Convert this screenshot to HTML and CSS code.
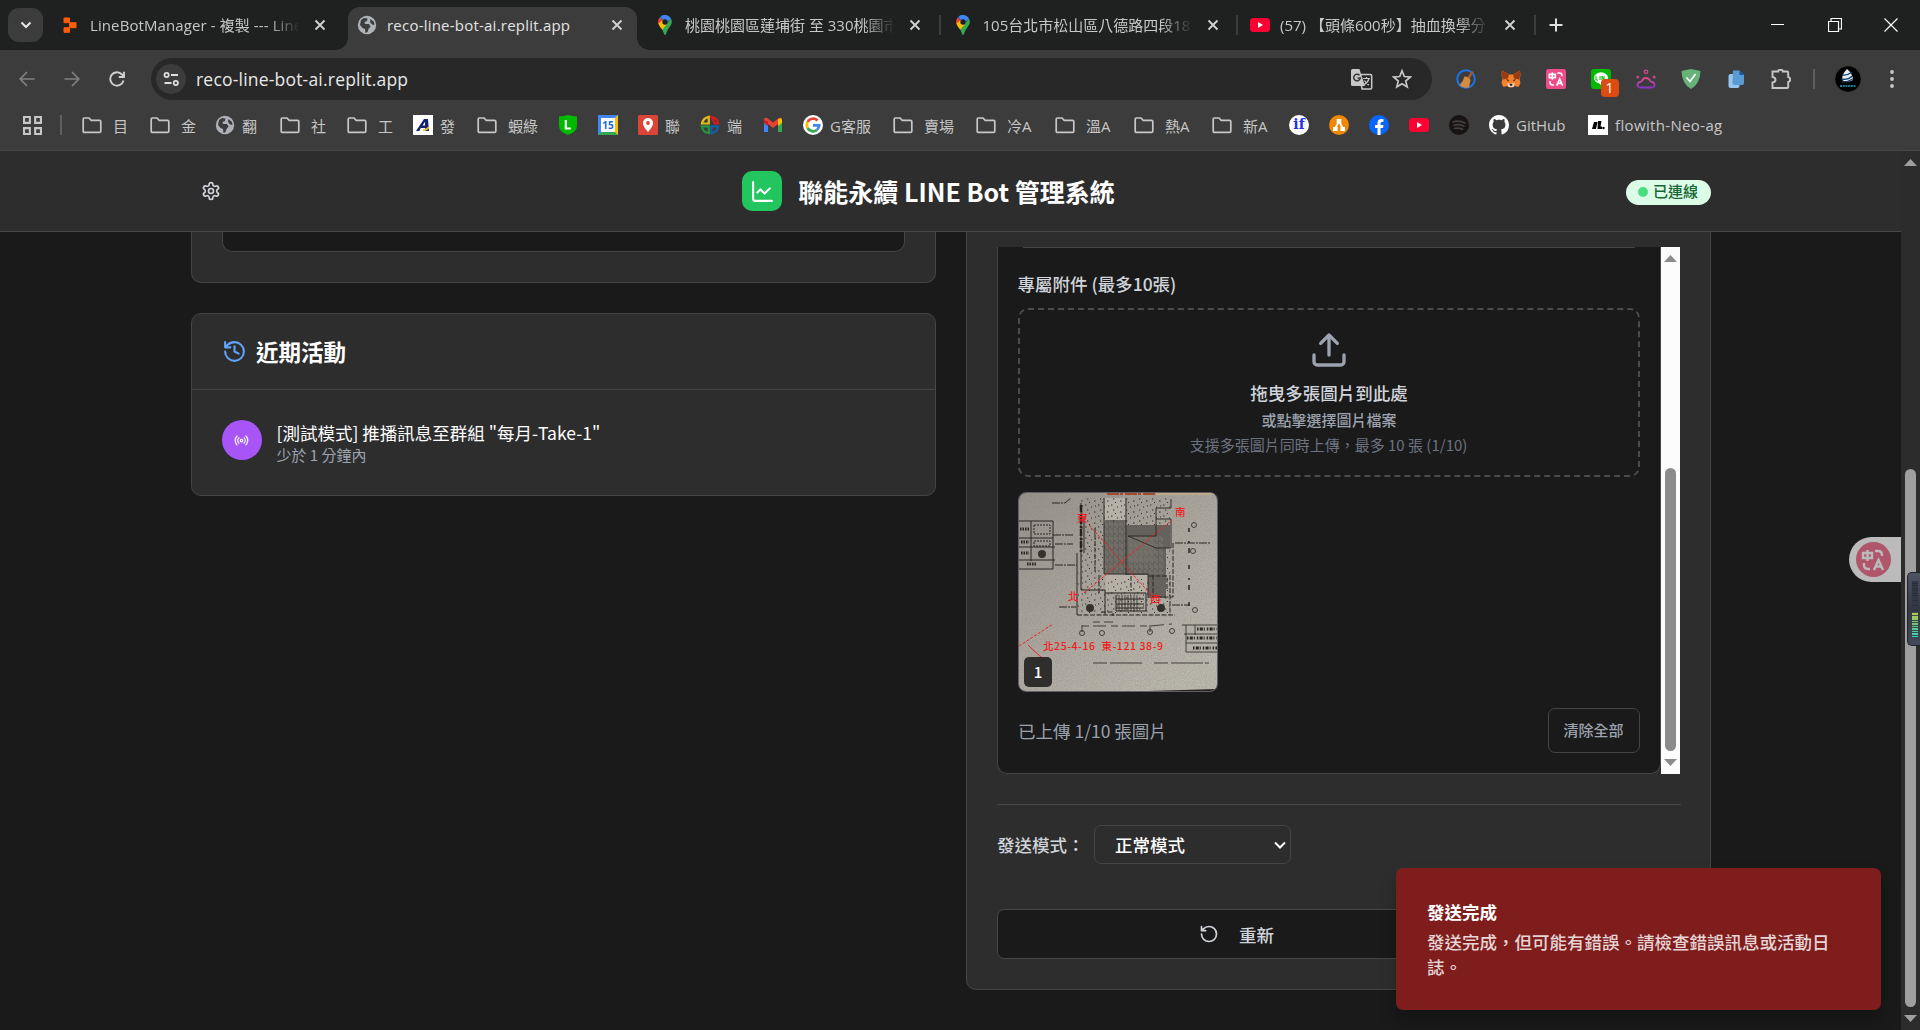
FILE: index.html
```html
<!DOCTYPE html>
<html lang="zh-Hant">
<head>
<meta charset="utf-8">
<title>reco-line-bot-ai.replit.app</title>
<link rel="stylesheet" href="styles.css">
</head>
<body>
<svg class="defs" width="0" height="0">
  <symbol id="folder" viewBox="0 0 20 20"><path d="M1.200 16.200V4.200Q1.200 3 2.400 3H7l2.200 2.400h8.400q1.200 0 1.200 1.200v9.600q0 1.200-1.200 1.200H2.400q-1.200 0-1.200-1.200z" fill="none" stroke="#c7c7c7" stroke-width="1.700"/></symbol>
  <symbol id="globe" viewBox="0 0 20 20"><circle cx="10" cy="10" r="9.200" fill="#aeb2b8"/><path d="M4 5l3-2 3.500.500-.500 2.500-2.500 1 .500 2h4l1.500 2.500-2 2.500-1 3-2 1-.500-4-2.500-1L3 10zM13.500 4l3.500 3 .5 3-2.500-.500-2-2.500z" fill="#3c3c3c"/></symbol>
  <symbol id="close" viewBox="0 0 12 12"><path d="M1.500 1.500l9 9m0-9l-9 9" stroke="#d0d0d0" stroke-width="1.900" fill="none"/></symbol>
  <symbol id="pin" viewBox="0 0 14 20"><path d="M7 0a7 7 0 0 0-5.400 2.500L5 5.300z" fill="#1a73e8"/><path d="M2.800 1.300A7 7 0 0 1 13 3.400L8.600 8.700 4.800 5z" fill="#4285f4"/><path d="M1.600 2.500Q-.800 5.800.5 9L4.600 6.900 5.500 5.500z" fill="#ea4335"/><path d="M13 3.400Q15 7.500 12.300 11 9 15 7.700 19.500q-.7 1-1.400 0Q5.300 15 1.700 11L9.300 8.300z" fill="#34a853"/><path d="M.3 8.500Q1 11 4.300 14.700L9.700 8 4.700 5.200z" fill="#fbbc04"/><circle cx="7" cy="7" r="2.700" fill="#1f2120"/></symbol>
  <symbol id="youtube" viewBox="0 0 20 20"><rect y="3" width="20" height="14" rx="3.500" fill="#ff0033"/><path d="M8 7l5 3-5 3z" fill="#fff"/></symbol>
  <symbol id="translate-mark" viewBox="0 0 24 24"><path d="M2 5h9v5H2zM6.500 2v11M14 3h3q4 0 4 4v1M3 15v2q0 4 4 4h2M13 22l4.500-10L22 22m-7.500-3.500h6" fill="none" stroke="currentColor" stroke-width="2.400"/></symbol>
</svg>

<div class="browser">
  <div class="tabstrip">
    <div class="tab-search"><svg width="12" height="8" viewBox="0 0 12 8"><path d="M1.500 1.500L6 6l4.500-4.500" fill="none" stroke="#e8e8e8" stroke-width="2"/></svg></div>
    <div class="tab first">
      <svg class="fav" viewBox="0 0 20 20"><path d="M4 3h5.500v4.700H4zM9.500 7.700H16v5H9.500zM4 12.700h5.500v4.600H4z" fill="#fd5c0b" stroke="#fd5c0b" stroke-width="1" stroke-linejoin="round"/></svg>
      <span class="tab-title">LineBotManager - 複製 --- Line Bot</span>
      <svg class="x"><use href="#close"/></svg>
    </div>
    <div class="tab active">
      <svg class="fav"><use href="#globe"/></svg>
      <span class="tab-title url-tab">reco-line-bot-ai.replit.app</span>
      <svg class="x"><use href="#close"/></svg>
    </div>
    <div class="tab sep">
      <svg class="fav"><use href="#pin"/></svg>
      <span class="tab-title">桃園桃園區蓮埔街 至 330桃園市桃園</span>
      <svg class="x"><use href="#close"/></svg>
    </div>
    <div class="tab sep">
      <svg class="fav"><use href="#pin"/></svg>
      <span class="tab-title">105台北市松山區八德路四段180號</span>
      <svg class="x"><use href="#close"/></svg>
    </div>
    <div class="tab sep">
      <svg class="fav"><use href="#youtube"/></svg>
      <span class="tab-title">(57) 【頭條600秒】抽血換學分？</span>
      <svg class="x"><use href="#close"/></svg>
    </div>
    <svg class="new-tab" viewBox="0 0 14 14"><path d="M7 .500v13M.500 7h13" stroke="#e0e0e0" stroke-width="2"/></svg>
    <div class="window-buttons">
      <svg width="14" height="14"><path d="M0 6.500h13" stroke="#fff"/></svg>
      <svg width="14" height="14"><path d="M.500 3.500h10v10H.500zM3 3V.500h10.500V11H11" fill="none" stroke="#fff" stroke-width="1.200"/></svg>
      <svg width="14" height="14"><path d="M.500.500l13 13m0-13l-13 13" stroke="#fff" stroke-width="1.200"/></svg>
    </div>
  </div>

  <div class="toolbar">
    <div class="nav">
      <svg width="16" height="16" viewBox="0 0 16 16"><path d="M15.500 8H1.500M8 1L1.200 8 8 15" fill="none" stroke="#808080" stroke-width="1.700"/></svg>
      <svg width="16" height="16" viewBox="0 0 16 16"><path d="M.500 8h14M8 1l6.800 7L8 15" fill="none" stroke="#808080" stroke-width="1.700"/></svg>
      <svg width="16" height="16" viewBox="0 0 16 16"><path d="M14.500 9.500A6.700 6.700 0 1 1 13 3.500L15 6M15 .800V6H9.800" fill="none" stroke="#d0d0d0" stroke-width="1.900"/></svg>
    </div>
    <div class="omnibox">
      <div class="site-info"><svg width="17" height="16" viewBox="0 0 17 16"><g fill="none" stroke="#dedede" stroke-width="1.800"><circle cx="3.600" cy="4" r="2.100"/><path d="M8 4h7M1.500 12h7"/><circle cx="12.800" cy="12" r="2.100"/></g></svg></div>
      <span class="address">reco-line-bot-ai.replit.app</span>
      <svg class="gtrans" width="22" height="21" viewBox="0 0 22 21"><path d="M9 5.500h10.500q1.200 0 1.200 1.200v12q0 1.200-1.200 1.200H11z" fill="none" stroke="#c7c7c7" stroke-width="1.500"/><path d="M1.500 0h7l1 3.500L14 17H1.500Q0 17 0 15.500v-14Q0 0 1.500 0z" fill="#c7c7c7"/><path d="M8.500 6.300A3.300 3.300 0 1 0 9.300 9H6.500" fill="none" stroke="#333" stroke-width="1.500"/><path d="M12 9.500h7M15.500 8v1.500M18 9.500q-1 4-5 6M13.500 11.500q1.500 3 4.500 4.500" fill="none" stroke="#c7c7c7" stroke-width="1.200"/></svg>
      <svg width="20" height="20" viewBox="0 0 20 20"><path d="M10 1.800l2.300 5.700 6 .500-4.600 4 1.500 6-5.200-3.300L4.800 18l1.500-6L1.700 8l6-.500z" fill="none" stroke="#c7c7c7" stroke-width="1.700"/></svg>
    </div>
    <div class="extensions">
      <svg class="ext" viewBox="0 0 20 20"><circle cx="10" cy="10" r="8.800" fill="none" stroke="#1a73e8" stroke-width="2"/><path d="M15.500 2l2.300 1-4.300 7-2.500-1.200z" fill="#a05a2c"/><path d="M8.500 7.500q4.500 0 6 3.500l-1.500 7.500Q7 20 3.500 16 7 13 8.500 7.500z" fill="#d18b43"/></svg>
      <svg class="ext" viewBox="0 0 20 20"><path d="M1 1.500l7 4h4l7-4 .5 5-1 3.500 1 4-2 4-4-1-2 1.500H8.500l-2-1.500-4 1-2-4 1-4L.500 6z" fill="#f5812b"/><path d="M1 1.500l7 4-1 4-5 1L.500 6zM19 1.500l-7 4 1 4 5 1L19.500 6z" fill="#9b3d12"/><path d="M5 10l3 1-1 1.500zM15 10l-3 1 1 1.500z" fill="#222"/><path d="M6 14l4 1 4-1-1.500 4h-5z" fill="#e7d6cc"/><path d="M8.500 15h3l-.500 1.700H9z" fill="#222"/></svg>
      <svg class="ext pink" viewBox="0 0 20 20"><rect width="20" height="20" rx="2.500" fill="#ee4b8b"/><use href="#translate-mark" x="2" y="2" width="16" height="16"/></svg>
      <div class="ext line-ext"><svg viewBox="0 0 20 20"><rect width="20" height="20" rx="3" fill="#00b900"/><ellipse cx="10" cy="9" rx="7" ry="5.700" fill="#fff"/><path d="M8 14l3 3 3-4z" fill="#fff"/><path d="M5 7v4h2M9 7v4M11 11V7l2 4V7" stroke="#00b900" fill="none"/></svg><span class="count">1</span></div>
      <svg class="ext" viewBox="0 0 20 20"><defs><linearGradient id="pp" x2="0" y2="1"><stop stop-color="#d94a82"/><stop offset="1" stop-color="#8a35c9"/></linearGradient></defs><path d="M4 18.500q-3-.500-2.500-3 .500-2.500 4-3 1.500-3.500 4.500-3.500t4.500 3.500q3.500.500 4 3 .500 2.500-2.500 3z" fill="none" stroke="url(#pp)" stroke-width="1.800"/><g fill="#bd4a91"><circle cx="1.800" cy="8" r="1.500"/><circle cx="18.200" cy="8" r="1.500"/></g><circle cx="10" cy="2.800" r="1.700" fill="none" stroke="#c64d8c" stroke-width="1.400"/></svg>
      <svg class="ext" viewBox="0 0 20 20"><path d="M10 0q5 1 9.500 2-.5 13-9.500 18Q1 15 .5 2 5 1 10 0z" fill="#67b279"/><path d="M5.500 8.500l3.500 4L14.500 5" fill="none" stroke="#fff" stroke-width="1.700"/></svg>
      <svg class="ext" viewBox="0 0 20 20"><rect x="2.500" y="5" width="11" height="14" rx="2" fill="#94c6ef"/><path d="M7 1.500h6.500L18 6v8q0 2-2 2H8.500q-2 0-2-2z" fill="#5b9bd3"/><path d="M13.500 1.500V6H18z" fill="#135b9e"/></svg>
      <svg class="ext" viewBox="0 0 20 20"><path d="M1.500 2.500h5.700V2Q7.200.8 9.500.8T11.700 2v.5h4.500q1 0 1 1V8q2 .3 2 2.500t-2 2.500v5q0 1-1 1H1.500v-5.500q3-.300 3-2.700T1.500 8z" fill="none" stroke="#c7c7c7" stroke-width="1.900"/></svg>
      <i class="tool-sep"></i>
      <svg class="avatar" viewBox="0 0 26 26"><circle cx="13" cy="13" r="12.700" fill="#000"/><path d="M12 3q6 5 6 11-6 3-11 0 0-6 5-11z" fill="#e7edf5"/><path d="M7 9q5 1 10-3M6.500 13q6 1.500 11-3M7 16q6 0 11-3" stroke="#10426f" stroke-width="1.300" fill="none"/><path d="M5 20h16" stroke="#147d99" stroke-width="2.200" stroke-dasharray="2 .7"/></svg>
      <svg class="menu-dots" viewBox="0 0 4 18" fill="#c7c7c7"><circle cx="2" cy="2" r="1.900"/><circle cx="2" cy="9" r="1.900"/><circle cx="2" cy="16" r="1.900"/></svg>
    </div>
  </div>

  <div class="bookmarks">
    <svg class="apps" viewBox="0 0 18 18"><path d="M1 1h5.500v5.500H1zM11.500 1H17v5.500h-5.500zM1 11.500h5.500V17H1zM11.500 11.500H17V17h-5.500z" fill="none" stroke="#c7c7c7" stroke-width="2"/></svg>
    <i class="tool-sep"></i>
    <div class="bm-list">
      <span class="bm dir"><svg><use href="#folder"/></svg>目</span>
      <span class="bm dir"><svg><use href="#folder"/></svg>金</span>
      <span class="bm"><svg><use href="#globe"/></svg>翻</span>
      <span class="bm dir"><svg><use href="#folder"/></svg>社</span>
      <span class="bm dir"><svg><use href="#folder"/></svg>工</span>
      <span class="bm"><svg viewBox="0 0 20 20"><rect width="20" height="20" fill="#fff"/><path d="M3 16L11 4h4l1 12h-3.500l-.3-3H7.800l-1.500 3zM9.500 10.500h2.500L12 6.800z" fill="#13236f"/><path d="M10 15q4 0 6-3" stroke="#eac037" stroke-width="1.700" fill="none"/></svg>發</span>
      <span class="bm dir"><svg><use href="#folder"/></svg>蝦綠</span>
      <span class="bm"><svg viewBox="0 0 20 20"><path d="M10 0q5 1 9 1.500V11q0 6-9 9-9-3-9-9V1.500Q6 1 10 0z" fill="#00b900"/><path d="M7.800 5v8.500h5" stroke="#fff" stroke-width="2.200" fill="none"/></svg></span>
      <span class="bm"><b class="calendar">15</b></span>
      <span class="bm"><svg viewBox="0 0 20 20"><rect width="20" height="20" rx="1.500" fill="#db4437"/><path d="M10 3a5 5 0 0 1 5 5q0 3.500-5 9-5-5.500-5-9a5 5 0 0 1 5-5z" fill="#fff"/><circle cx="10" cy="8" r="1.900" fill="#db4437"/></svg>聯</span>
      <span class="bm"><svg viewBox="0 0 20 20" fill="none" stroke-width="2.200"><path d="M2 8.500Q3 3 8.800 1.800V8.500z" stroke="#dfba20"/><path d="M11.500 1.800q6 1.200 6.700 6.700h-3.500z" stroke="#d6191f"/><path d="M1.800 11.300h7v6.900Q2.500 17 1.800 11.300z" stroke="#259440"/><path d="M11.300 11.300h6.900q-.7 5.700-6.900 6.900z" stroke="#155fa5"/></svg>端</span>
      <span class="bm"><svg viewBox="0 0 20 20"><path d="M1 4v13h4V8z" fill="#4285f4"/><path d="M19 4v13h-4V8z" fill="#34a853"/><path d="M1 5q0-3 3-2l6 4.500L16 3q3-1 3 2l-4 4-5 4-5-4z" fill="#ea4335"/><path d="M15 4.200q4-2.500 4 1V8l-4 3z" fill="#fbbc04"/><path d="M1 5v3l4 3V6.500z" fill="#c5221f"/></svg></span>
      <span class="bm"><svg viewBox="0 0 20 20"><circle cx="10" cy="10" r="10" fill="#fff"/><g fill="none" stroke-width="2.700"><path d="M14.500 5.500A6.200 6.200 0 0 0 4.600 7" stroke="#ea4335"/><path d="M4.600 7a6.300 6.300 0 0 0 0 6" stroke="#fbbc04"/><path d="M4.600 13a6.200 6.200 0 0 0 9.300 2" stroke="#34a853"/><path d="M13.900 15q2.200-1.700 2.300-4.700H10" stroke="#4285f4"/></g></svg>G客服</span>
      <span class="bm dir"><svg><use href="#folder"/></svg>賣場</span>
      <span class="bm dir"><svg><use href="#folder"/></svg>冷A</span>
      <span class="bm dir"><svg><use href="#folder"/></svg>溫A</span>
      <span class="bm dir"><svg><use href="#folder"/></svg>熱A</span>
      <span class="bm dir"><svg><use href="#folder"/></svg>新A</span>
      <span class="bm"><b class="if-logo">if</b></span>
      <span class="bm"><svg viewBox="0 0 20 20"><circle cx="10" cy="10" r="10" fill="#f08705"/><path d="M10 6l-4 8M10 6l4 8" stroke="#fff" stroke-width="1.700"/><path d="M7.700 4h4.600v4.500H7.700zM4 12h4.600v4H4zM11.400 12H16v4h-4.600z" fill="#fff"/></svg></span>
      <span class="bm"><svg viewBox="0 0 20 20"><circle cx="10" cy="10" r="10" fill="#0866ff"/><path d="M8.500 20v-7H6v-3h2.500V8q0-4 4-4l2 .2v2.600h-1.300q-1.700 0-1.700 1.700V10h3l-.5 3h-2.500v7z" fill="#fff"/></svg></span>
      <span class="bm"><svg><use href="#youtube"/></svg></span>
      <span class="bm"><svg viewBox="0 0 20 20"><circle cx="10" cy="10" r="10" fill="#191414"/><path d="M4 7q6-2 12 1M5 10.300q5-1.500 10 .9M5.500 13.400q4-1 8 .7" stroke="#434040" stroke-width="1.700" fill="none" stroke-linecap="round"/></svg></span>
      <span class="bm"><svg viewBox="0 0 16 16"><path fill="#fff" d="M8 0C3.580 0 0 3.580 0 8c0 3.540 2.290 6.530 5.470 7.590.4.070.550-.170.550-.380 0-.190-.010-.820-.010-1.490-2.010.370-2.530-.490-2.690-.940-.090-.230-.480-.940-.820-1.130-.280-.150-.680-.520-.010-.530.630-.010 1.080.580 1.230.820.720 1.210 1.870.870 2.330.660.070-.520.280-.870.510-1.070-1.780-.2-3.640-.890-3.640-3.950 0-.870.310-1.590.820-2.150-.080-.2-.360-1.020.080-2.120 0 0 .670-.210 2.200.820.640-.180 1.320-.270 2-.270s1.360.090 2 .270c1.530-1.040 2.200-.820 2.200-.820.440 1.100.160 1.920.080 2.120.510.560.820 1.270.820 2.150 0 3.070-1.870 3.750-3.650 3.950.290.250.540.730.540 1.480 0 1.070-.010 1.930-.010 2.200 0 .210.150.460.550.380A8.010 8.010 0 0 0 16 8c0-4.420-3.580-8-8-8z"/></svg>GitHub</span>
      <span class="bm flowith"><svg viewBox="0 0 20 20"><rect width="20" height="20" fill="#fff"/><path d="M4 14l2-7h3.500l-1.500 7zM10 6h3.500l-1 5.500H14V14H9.500z" fill="#000"/><circle cx="15.500" cy="13" r="1.200"/></svg>flowith-Neo-ag</span>
    </div>
  </div>
</div>

<div class="viewport">
  <div class="page">
    <header class="app-header">
      <svg class="gear" viewBox="0 0 24 24"><path d="M12.220 2h-.440a2 2 0 0 0-2 2v.180a2 2 0 0 1-1 1.730l-.430.250a2 2 0 0 1-2 0l-.150-.080a2 2 0 0 0-2.730.730l-.220.380a2 2 0 0 0 .730 2.730l.150.100a2 2 0 0 1 1 1.720v.510a2 2 0 0 1-1 1.740l-.150.090a2 2 0 0 0-.730 2.730l.220.380a2 2 0 0 0 2.730.730l.150-.080a2 2 0 0 1 2 0l.430.250a2 2 0 0 1 1 1.730V20a2 2 0 0 0 2 2h.440a2 2 0 0 0 2-2v-.180a2 2 0 0 1 1-1.730l.430-.250a2 2 0 0 1 2 0l.150.080a2 2 0 0 0 2.730-.730l.220-.390a2 2 0 0 0-.730-2.730l-.150-.080a2 2 0 0 1-1-1.740v-.500a2 2 0 0 1 1-1.740l.150-.090a2 2 0 0 0 .730-2.730l-.220-.380a2 2 0 0 0-2.730-.730l-.150.080a2 2 0 0 1-2 0l-.430-.250a2 2 0 0 1-1-1.730V4a2 2 0 0 0-2-2z"/><circle cx="12" cy="12" r="3"/></svg>
      <div class="brand">
        <span class="logo"><svg viewBox="0 0 24 24"><path d="M3 3v16a2 2 0 0 0 2 2h16M19 9l-5 5-4-4-3 3"/></svg></span>
        <h1>聯能永續 LINE Bot 管理系統</h1>
      </div>
      <div class="status"><i></i><span>已連線</span></div>
    </header>

    <main class="columns">
      <section class="col">
        <div class="card cut-card"><div class="cut-field"></div></div>
        <div class="card activity">
          <div class="card-head">
            <svg viewBox="0 0 24 24"><path d="M3 12a9 9 0 1 0 9-9 9.750 9.750 0 0 0-6.740 2.740L3 8M3 3v5h5M12 7v5l4 2"/></svg>
            <h2>近期活動</h2>
          </div>
          <div class="activity-row">
            <span class="bubble"><svg viewBox="0 0 24 24"><path d="M4.900 19.100C1 15.200 1 8.800 4.900 4.900M7.800 16.200c-2.300-2.300-2.300-6.100 0-8.500M16.200 7.800c2.300 2.300 2.300 6.100 0 8.500M19.100 4.900C23 8.800 23 15.100 19.100 19"/><circle cx="12" cy="12" r="2"/></svg></span>
            <div><p class="act-title">[測試模式] 推播訊息至群組 "每月-Take-1"</p><p class="act-time">少於 1 分鐘內</p></div>
          </div>
        </div>
      </section>

      <section class="col card send">
        <div class="scroll-area">
          <div class="panel">
            <div class="cut-line"></div>
            <p class="label">專屬附件 (最多10張)</p>
            <div class="dropzone">
              <svg viewBox="0 0 24 24"><path d="M21 15v4a2 2 0 0 1-2 2H5a2 2 0 0 1-2-2v-4M17 8l-5-5-5 5M12 3v12"/></svg>
              <p class="dz1">拖曳多張圖片到此處</p>
              <p class="dz2">或點擊選擇圖片檔案</p>
              <p class="dz3">支援多張圖片同時上傳，最多 10 張 (1/10)</p>
            </div>
            <div class="thumb">
              <svg width="198" height="198" viewBox="0 0 198 198">
                <defs>
                  <linearGradient id="paper" x1="0" y1="0" x2=".8" y2="1"><stop stop-color="#96918a"/><stop offset=".5" stop-color="#aca79e"/><stop offset="1" stop-color="#bcb9ae"/></linearGradient>
                  <pattern id="dots" width="13" height="11" patternUnits="userSpaceOnUse"><path d="M1 1h1.400M7 3h1M3 6h1.300M10 8h1.500M5 9.500h1M11 2h1" stroke="#33302c" stroke-width="1.100"/></pattern>
                  <pattern id="hatch" width="5" height="7" patternUnits="userSpaceOnUse"><path d="M1 0v5M3 2v5" stroke="#8d8981" stroke-width=".6"/></pattern>
                  <filter id="grain" x="0" y="0" width="1" height="1"><feTurbulence type="fractalNoise" baseFrequency=".8" numOctaves="2"/><feColorMatrix values="0 0 0 0 .2  0 0 0 0 .2  0 0 0 0 .18  0 0 0 1.200 -.45"/></filter>
                </defs>
                <rect width="198" height="198" fill="url(#paper)"/>
                <rect width="198" height="198" filter="url(#grain)" opacity=".6"/>
                <path d="M62 4h90v118H58z" fill="url(#dots)"/>
                <path d="M86 5h20v22H86zM86 82h48v17H87z" fill="#b5b1a6"/><path d="M86 5h20v22H86zM89 86h42v12H89z" fill="url(#dots)"/>
                <path d="M85 29h22v52H85zM107 32h44v23h-4v50h-18V82h-22z" fill="#65625d"/>
                <path d="M85 29h22v52H85zM109 43h36v38h-36z" fill="url(#hatch)"/>
                <path d="M109 44h26v25h-26z" fill="#77736d" opacity=".5"/>
                <g fill="none" stroke="#292724" stroke-width="1">
                  <path d="M85 5v76h44v24M107 5v77M109 43h28V26h15v29h-15zM137 26V15h15v-9M86 28h22" stroke-width=".9"/>
                  <path d="M62 10v87M58 60v62M65 24v36M62 97h24v25M86 100h41v18H97v-16M97 106h28M97 111h28M97 115h28"/>
                  <path d="M100 102v16m3-16v16m3-16v16m3-16v16m3-16v16m3-16v16m3-16v16" stroke-width=".7"/>
                  <path d="M58 122h98M82 119h12v4M134 82v22h20V50M151 82v40M76 35v45M80 82v18M112 83v15M130 83h18v14" stroke-dasharray="5 1.500"/>
                  <path d="M0 28h34v48H0M0 45h34M0 54h36M12 28v40M0 67h36"/>
                  <path d="M15 32h16v9H15zM15 48h16v5H15z" stroke-dasharray="2 1"/>
                  <path d="M34 42h20M36 51h18M36 72h22M33 10h13l6-5M40 114h17M156 50h35M153 112h18" stroke-dasharray="8 1 2 1"/>
                  <path d="M170 35v80" stroke-dasharray="4 9 2 5 5 12" stroke-width="1.500"/>
                  <path d="M63 139v-9M131 139v-9M63 133h68l22-2M74 129h20" stroke-dasharray="7 4 13 5" stroke-width=".8"/>
                  <g stroke-width=".8"><circle cx="63" cy="140" r="2.500"/><circle cx="83" cy="140" r="2.500"/><circle cx="131" cy="139" r="2.500"/><circle cx="153" cy="138" r="2.500"/><circle cx="175" cy="32" r="2.500"/><circle cx="174" cy="58" r="2.500"/><circle cx="176" cy="117" r="2.500"/></g>
                  <path d="M163 132h36M167 132v27h31M165 141h33M167 150h31M176 132v10" stroke-width=".8"/>
                  <path d="M178 136h20M168 145h30M174 155h24" stroke-width="2.800" stroke-dasharray="1.500 1.300 3 1 1 2"/>
                  <path d="M74 170h50M135 170h55" stroke-dasharray="14 3 32 2" stroke-width=".8"/>
                  <path d="M1 36h9M2 49h8M2 60h8M8 71h9" stroke-width="3" stroke-dasharray="1.500 1"/>
                </g>
                <g fill="#34322d"><circle cx="71" cy="115" r="4"/><circle cx="142" cy="115" r="4"/><circle cx="23" cy="61" r="4"/></g>
                <path d="M62 12v48" stroke="#24211e" stroke-width="2.500" stroke-dasharray="7 2 2 1"/>
                <path d="M88 1h48" stroke="#a6492d" stroke-width="2" stroke-dasharray="12 1 3 2"/><path d="M137 1h61" stroke="#bfa78b" stroke-width="2"/>
                <path d="M130 198l68-2v2z" fill="#22201f"/>
                <g stroke="#ef1e23" fill="none"><path d="M70 32l63 71M65 100l88-73M0 153l34-22" stroke-dasharray="3 1.500" stroke-width="1"/><path d="M9 152l16 15"/></g>
                <g class="plan-text"><text x="58" y="29">東</text><text x="156" y="23">南</text><text x="49" y="107">北</text><text x="131" y="110">西</text><text x="24" y="157" textLength="120" xml:space="preserve">北25-4-16  東-121 38-9</text></g>
              </svg>
              <span class="index">1</span>
            </div>
            <div class="upload-foot"><span>已上傳 1/10 張圖片</span><button>清除全部</button></div>
          </div>
          <div class="inner-bar"><i class="up"></i><i class="thumb-bar"></i><i class="down"></i></div>
        </div>
        <div class="mode-row">
          <span>發送模式：</span>
          <div class="select">正常模式<svg width="12" height="8" viewBox="0 0 12 8"><path d="M1 1.500l5 5 5-5" fill="none" stroke="#fff" stroke-width="2"/></svg></div>
        </div>
        <div class="reset"><svg viewBox="0 0 24 24"><path d="M3 12a9 9 0 1 0 9-9 9.750 9.750 0 0 0-6.740 2.740L3 8M3 3v5h5"/></svg>重新</div>
      </section>
    </main>
    <div class="float-translate"><span><svg viewBox="0 0 24 24"><use href="#translate-mark"/></svg></span></div>
    <div class="toast"><strong>發送完成</strong><p>發送完成，但可能有錯誤。請檢查錯誤訊息或活動日誌。</p></div>
  </div>
  <div class="page-bar"><i class="up"></i><i class="thumb-bar"></i><i class="down"></i><div class="meter"><span></span></div></div>
</div>
</body>
</html>
```

FILE: styles.css
```css
* { box-sizing: border-box; }
body {
  margin: 0; width: 1920px; height: 1030px; overflow: hidden;
  background: #1a1a1a; color: #fff;
  font-family: "Noto Sans CJK TC", sans-serif;
  display: flex; flex-direction: column;
}
.defs { position: absolute; }
svg { display: block; flex: none; }
p, h1, h2 { margin: 0; }

/* browser frame */
.browser { height: 151px; background: #3c3c3c; border-bottom: 1px solid #484848; font-family: "Open Sans", "Noto Sans CJK TC", sans-serif; }
.tabstrip { height: 50px; background: #1f2120; display: flex; align-items: center; padding-left: 8px; }
.tab-search { width: 35px; height: 34px; border-radius: 11px; background: #3c3c3c; display: flex; align-items: center; justify-content: center; }
.tab { position: relative; width: 297.5px; height: 50px; padding-left: 14px; display: flex; align-items: center; color: #c7c7c7; }
.tab.first { width: 305px; padding-left: 17px; }
.tab.first .x { margin-left: 16px; }
.tab.first .tab-title { letter-spacing: .1px; }
.fav { width: 20px; height: 20px; }
.tab-title { width: 208px; margin-left: 10px; padding-bottom: 1px; font-size: 15px; white-space: nowrap; overflow: hidden; -webkit-mask-image: linear-gradient(90deg, #000 178px, transparent 210px); }
.url-tab { letter-spacing: .22px; -webkit-mask-image: none; }
.x { width: 12px; height: 12px; margin-left: 15px; }
.tab.active { width: 289px; height: 43px; margin-top: 7px; margin-right: 6px; padding: 0 0 7px 9px; background: #3c3c3c; border-radius: 12px 12px 0 0; color: #e3e3e3; }
.tab.active .x { margin-left: 16px; }
.tab.active::before, .tab.active::after { content: ""; position: absolute; bottom: 0; width: 12px; height: 12px; }
.tab.active::before { left: -12px; background: radial-gradient(circle at 0 0, transparent 11.5px, #3c3c3c 12px); }
.tab.active::after { right: -12px; background: radial-gradient(circle at 100% 0, transparent 11.5px, #3c3c3c 12px); }
.tab.sep { padding-left: 12px; }
.tab.sep .x { margin-left: 16px; }
.tab.sep::after { content: ""; position: absolute; right: 0; top: 15px; width: 2px; height: 20px; background: #3c3c3c; }
.new-tab { width: 14px; height: 14px; margin-left: 13px; }
.window-buttons { margin-left: auto; padding-right: 22px; display: flex; gap: 42.5px; }

.toolbar { height: 58px; display: flex; align-items: center; background: #3c3c3c; }
.nav { width: 151px; padding-left: 19px; display: flex; gap: 29px; }
.omnibox { width: 1281px; height: 42px; border-radius: 21px; background: #282828; padding: 0 20px 0 5px; display: flex; align-items: center; }
.site-info { width: 30px; height: 30px; border-radius: 50%; background: #3c3c3c; display: flex; align-items: center; justify-content: center; }
.address { margin-left: 10px; font-size: 17.5px; letter-spacing: .2px; color: #e8e8e8; }
.gtrans { margin-left: auto; margin-right: 19px; }
.extensions { flex: 1; padding: 0 26px 0 23.500px; display: flex; align-items: center; }
.ext { width: 20px; height: 20px; margin-right: 25px; }
.extensions > .ext:nth-child(n+8) { margin-right: 26px; }
.pink { color: #fff; }
.line-ext { position: relative; }
.count { position: absolute; left: 10px; top: 10px; width: 18px; height: 18px; border-radius: 4px; background: #dc4b12; font-size: 14px; line-height: 18px; text-align: center; }
.tool-sep { width: 2px; height: 20px; background: #5f5f5f; }
.extensions .tool-sep { margin-left: -4px; }
.avatar { width: 26px; height: 26px; margin-left: 20px; }
.menu-dots { width: 4px; height: 18px; margin-left: auto; }

.bookmarks { height: 34px; display: flex; align-items: center; padding-left: 23px; color: #c7c7c7; font-size: 15px; }
.apps { width: 19px; height: 19px; margin-right: 18px; }
.bm-list { margin-left: 20px; display: grid; grid-template-columns: 68px 65px 65px 67px 66px 64px 81px 40px 40px 62px 63px 40px 90px 83px 79px 79px 78px 77px 40px 40px 40px 40px 40px 99px 140px; }
.bm { display: flex; align-items: center; gap: 7px; height: 22px; white-space: nowrap; }
.bm.dir { gap: 11px; }
.flowith { letter-spacing: .35px; }
.bm svg { width: 20px; height: 20px; }
.calendar { width: 20px; height: 20px; border: 3px solid #4285f4; border-right-color: #fbbc04; border-bottom-color: #34a853; background: #fff; color: #1967d2; font-size: 10px; line-height: 14px; text-align: center; }
.if-logo { width: 20px; height: 20px; border-radius: 50%; background: #fff; color: #1f33ee; font: bold 14px/19px "DejaVu Serif", serif; text-align: center; }

/* app */
.viewport { height: 879px; display: flex; }
.page { position: relative; width: 1901px; overflow: hidden; background: #1a1a1a; }
.app-header { height: 81px; background: #2d2d2d; border-bottom: 1px solid #484848; padding: 0 190px 0 201px; display: grid; grid-template-columns: 1fr auto 1fr; align-items: center; }
.gear { width: 20px; height: 20px; fill: none; stroke: #d1d5db; stroke-width: 2; }
.brand { display: flex; align-items: center; gap: 16px; margin-left: -55px; }
.logo { width: 40px; height: 40px; border-radius: 10px; background: #22c55e; display: flex; align-items: center; justify-content: center; }
.logo svg { width: 25px; height: 25px; fill: none; stroke: #fff; stroke-width: 2; stroke-linecap: round; stroke-linejoin: round; }
h1 { font-size: 25px; line-height: 35px; font-weight: 700; white-space: nowrap; }
.status { justify-self: end; height: 25px; margin-top: 2px; border-radius: 13px; background: #dcfce7; color: #166534; font-size: 15px; line-height: 20px; font-weight: 500; padding: 0 13px 2px 12px; display: flex; align-items: center; gap: 5px; }
.status i { width: 10px; height: 10px; margin-top: 1px; border-radius: 50%; background: #4ade80; }

.columns { display: flex; gap: 30px; padding-left: 191px; }
.col { width: 745px; }
.card { background: #2d2d2d; border: 1px solid #454545; border-radius: 10px; }
.cut-card { height: 51px; border-top: 0; border-radius: 0 0 10px 10px; padding: 0 30px; }
.cut-field { height: 20px; background: #1a1a1a; border: 1px solid #454545; border-top: 0; border-radius: 0 0 10px 10px; }
.activity { margin-top: 30px; height: 183px; }
.card-head { height: 76px; border-bottom: 1px solid #454545; padding-left: 30px; display: flex; align-items: center; gap: 9px; }
.card-head svg { width: 25px; height: 25px; fill: none; stroke: #60a5fa; stroke-width: 2; stroke-linecap: round; stroke-linejoin: round; }
h2 { font-size: 22.5px; line-height: 30px; font-weight: 700; padding-bottom: 2px; }
.activity-row { padding: 30px 30px 0 29.500px; display: flex; gap: 15px; }
.bubble { width: 40px; height: 40px; border-radius: 50%; background: #a855f7; display: flex; align-items: center; justify-content: center; }
.bubble svg { width: 15px; height: 15px; fill: none; stroke: #fff; stroke-width: 2; stroke-linecap: round; }
.act-title { font-size: 17.5px; line-height: 25px; }
.act-time { font-size: 15px; line-height: 20px; color: #9ca3af; }

.send { height: 758px; border-top: 0; border-radius: 0 0 10px 10px; padding: 15px 29px 0 30px; }
.scroll-area { height: 527px; display: flex; }
.panel { width: 664px; height: 527px; background: #1a1a1a; border: 1px solid #454545; border-top: 0; border-radius: 0 0 10px 10px; padding: 0 20px; }
.cut-line { height: 1px; margin: 0 5px; background: #454545; }
.label { margin: 23px 0 0 -.5px; font-size: 17.5px; line-height: 25px; font-weight: 500; color: #d1d5db; }
.dropzone { margin-top: 12px; height: 169px; border: 2px dashed #4b4b4d; border-radius: 10px; padding-top: 20px; display: flex; flex-direction: column; align-items: center; }
.dropzone svg { width: 40px; height: 40px; fill: none; stroke: #9ca3af; stroke-width: 2; stroke-linecap: round; stroke-linejoin: round; }
.dz1 { margin-top: 10px; font-size: 17.5px; line-height: 25px; font-weight: 500; color: #d1d5db; }
.dz2 { margin-top: 5px; font-size: 15px; line-height: 20px; font-weight: 500; color: #9ca3af; }
.dz3 { margin: 5px 0 0 -1px; font-size: 15px; line-height: 20px; color: #6b7280; }
.thumb { position: relative; width: 200px; height: 200px; margin-top: 15px; border: 1px solid #606064; border-radius: 8px; overflow: hidden; }
.plan-text { fill: #f01c20; font-size: 10.5px; font-weight: 500; }
.index { position: absolute; left: 5px; bottom: 4px; width: 28px; height: 30px; border-radius: 5px; background: rgba(25, 25, 25, .85); font-size: 15px; font-weight: 500; line-height: 30px; text-align: center; }
.upload-foot { margin-top: 16px; display: flex; align-items: center; justify-content: space-between; font-size: 17.5px; color: #9ca3af; }
button { width: 92px; height: 45px; background: #1a1a1a; border: 1px solid #454545; border-radius: 7px; color: #9ca3af; font: 500 15px "Noto Sans CJK TC", sans-serif; padding: 0 1px 2px 0; }
.inner-bar { width: 19px; background: #fcfcfc; display: flex; flex-direction: column; align-items: center; }
.inner-bar .up, .page-bar .up, .inner-bar .down, .page-bar .down { width: 13px; height: 7px; background: #8b8b8b; clip-path: polygon(50% 0, 100% 100%, 0 100%); }
.inner-bar .up { margin-top: 8px; }
.inner-bar .down, .page-bar .down { clip-path: polygon(0 0, 100% 0, 50% 100%); margin-top: 8px; }
.inner-bar .thumb-bar { margin-top: 206px; width: 11px; height: 283px; border-radius: 6px; background: #8b8b8b; }

.mode-row { margin-top: 30px; border-top: 1px solid #484848; padding-top: 20px; display: flex; align-items: center; font-size: 17.5px; font-weight: 500; color: #d1d5db; }
.mode-row > span { width: 97px; white-space: nowrap; }
.select { width: 197px; height: 39px; border: 1px solid #454545; border-radius: 7px; padding: 0 4px 0 20px; display: flex; align-items: center; justify-content: space-between; color: #fff; }
.reset { margin-top: 45px; height: 50px; background: #1a1a1a; border: 1px solid #484848; border-radius: 7px; padding-left: 201px; display: flex; align-items: center; gap: 20px; font-size: 17.5px; font-weight: 500; color: #d1d5db; }
.reset svg { width: 20px; height: 20px; fill: none; stroke: #d1d5db; stroke-width: 2; stroke-linecap: round; stroke-linejoin: round; }

/* overlays */
.float-translate { position: absolute; right: 0; top: 386px; width: 52px; height: 45px; border-radius: 23px 0 0 23px; background: #bbb; padding: 5px 0 0 6.500px; }
.float-translate span { width: 35px; height: 35px; border-radius: 50%; background: #b0566b; color: #bbb; display: flex; align-items: center; justify-content: center; }
.float-translate svg { width: 24px; height: 24px; }
.toast { position: absolute; left: 1396px; top: 717px; width: 485px; height: 142px; border-radius: 7px; background: #7f1d1d; padding: 31px 31px; font-size: 17.5px; line-height: 25px; box-shadow: 0 10px 16px rgba(0, 0, 0, .25); }
.toast strong { display: block; font-weight: 700; }
.toast p { margin-top: 5px; width: 412px; font-weight: 500; color: rgba(255, 255, 255, .82); }
.page-bar { position: relative; width: 19px; background: #2c2c2c; display: flex; flex-direction: column; align-items: center; }
.page-bar .up, .page-bar .down { background: #9f9f9f; }
.page-bar .up { margin-top: 8px; }
.page-bar .thumb-bar { margin-top: 303px; width: 11px; height: 538px; border-radius: 6px; background: #9f9f9f; }
.meter { position: absolute; right: 0; top: 421px; width: 13px; height: 74px; border: 1px solid #22242d; border-right: 0; border-radius: 5px 0 0 5px; background: linear-gradient(#4d5363, #343844 50%, #434857); padding: 8px 0 0 4px; }
.meter span { display: block; width: 6px; height: 57px; background: repeating-linear-gradient(transparent 0 1.5px, rgba(40, 44, 55, .8) 1.5px 2.5px), linear-gradient(#343844 55%, #b5c951 57%, #69c77d 78%, #3cd1c3); }
```
